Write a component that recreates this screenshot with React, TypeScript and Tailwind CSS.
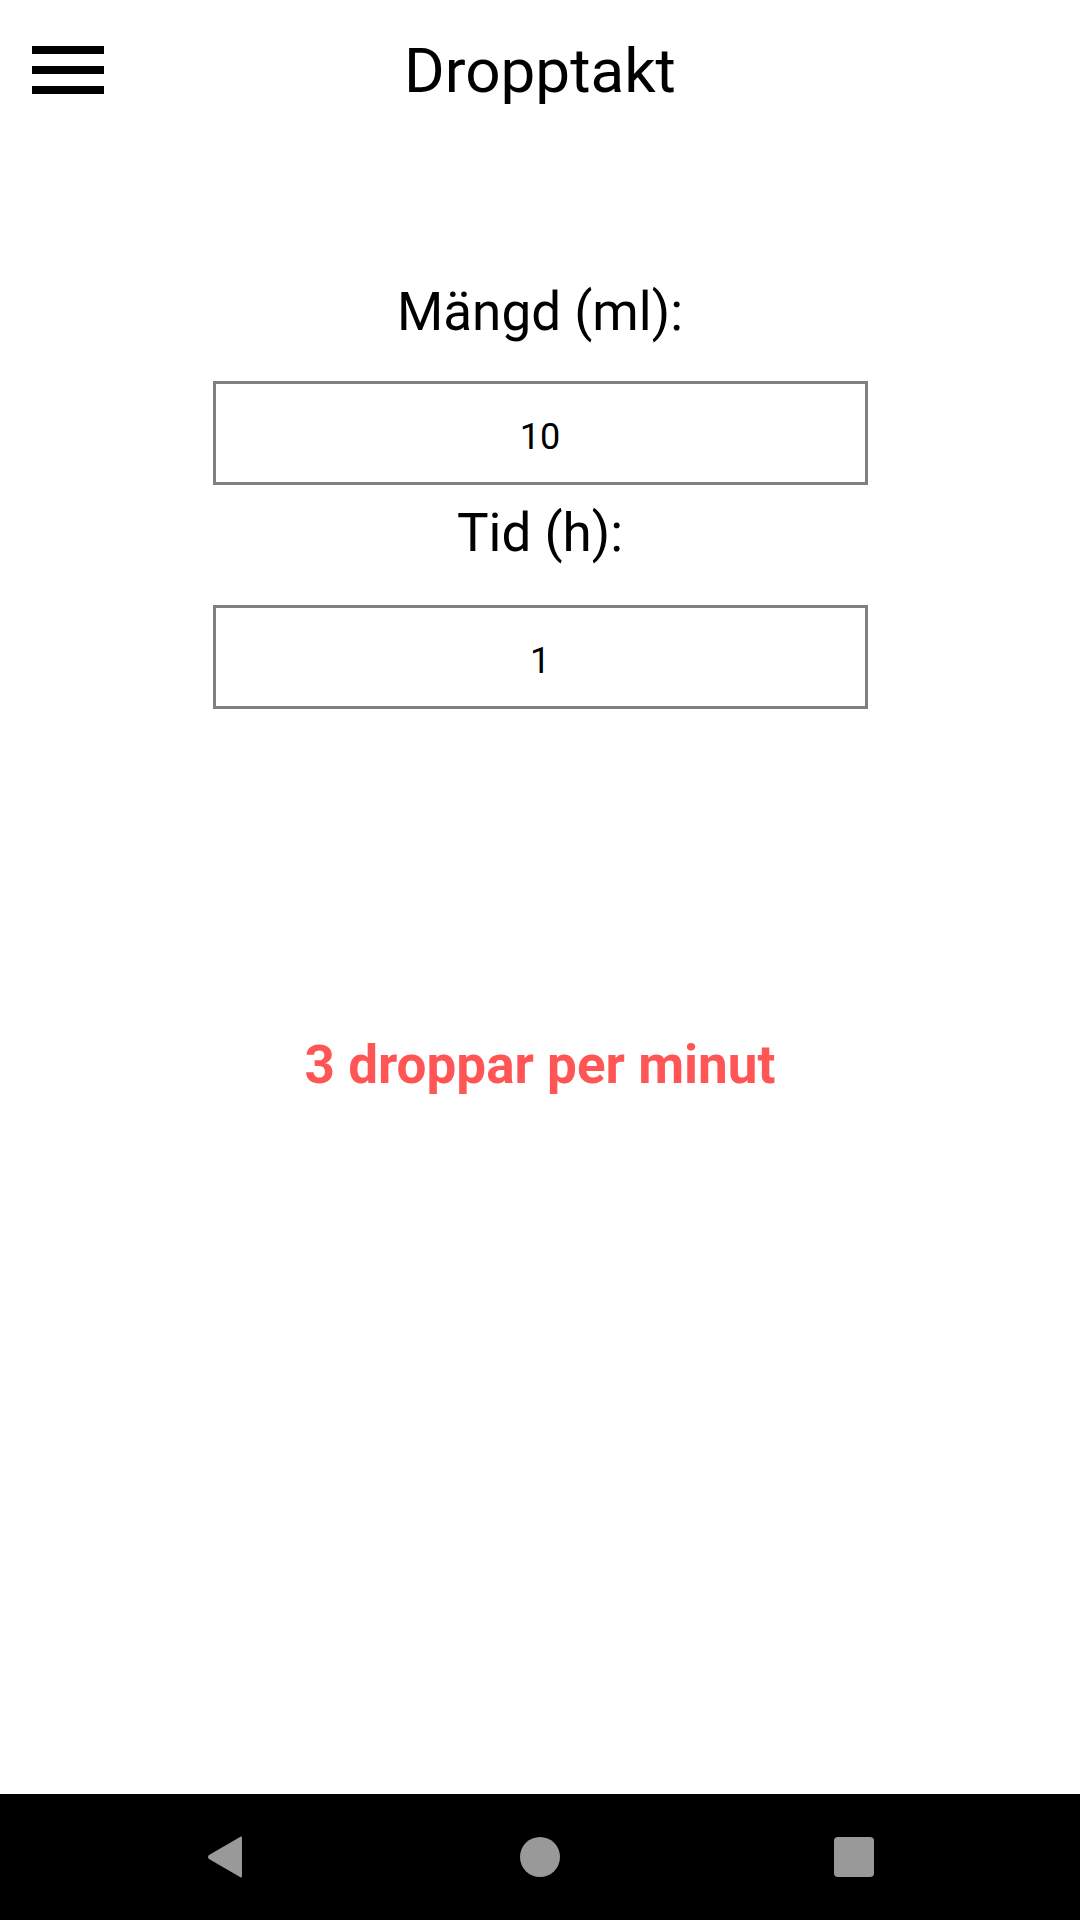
import React from 'react';

const font = { fontFamily: 'Roboto, "Noto Sans", sans-serif' };

function Field({ value }: { value: string }) {
  return (
    <input
      type="text"
      readOnly
      defaultValue={value}
      className="block w-[655px] h-[104px] pt-[7px] border-[3px] border-[#808080] bg-white text-center text-[36px] text-black outline-none"
      style={font}
    />
  );
}

export default function App() {
  return (
    <div className="h-[1920px] flex flex-col bg-white text-black" style={font}>
      {/* Toolbar */}
      <header className="h-[140px] grid grid-cols-[1fr_auto_1fr] items-center">
        <div className="pl-[32px] flex flex-col gap-[12px]">
          <span className="block w-[72px] h-[8px] bg-black"></span>
          <span className="block w-[72px] h-[8px] bg-black"></span>
          <span className="block w-[72px] h-[8px] bg-black"></span>
        </div>
        <h1 className="text-[62px] leading-[71px] font-normal">Dropptakt</h1>
        <div></div>
      </header>

      {/* Form */}
      <main className="flex-1 flex flex-col items-center">
        <label className="mt-[140px] text-[53px] leading-[64px]">Mängd (ml):</label>
        <div className="mt-[37px]">
          <Field value="10" />
        </div>
        <label className="mt-[16px] text-[53px] leading-[64px]">Tid (h):</label>
        <div className="mt-[40px]">
          <Field value="1" />
        </div>
        <p className="mt-[324px] text-[53px] leading-[64px] font-bold text-[#ff5555]">3 droppar per minut</p>
      </main>

      {/* Android nav bar */}
      <nav className="h-[126px] bg-black flex items-center justify-center gap-[274px]">
        <svg width="40" height="44" viewBox="0 0 40 44">
          <path d="M34 2 Q36 0 36 4 L36 40 Q36 44 34 42 L3 24 Q1 22 3 20 Z" fill="#999999" />
        </svg>
        <span className="block w-[40px] h-[40px] rounded-full bg-[#999999]"></span>
        <span className="block w-[40px] h-[40px] rounded-[4px] bg-[#999999]"></span>
      </nav>
    </div>
  );
}
